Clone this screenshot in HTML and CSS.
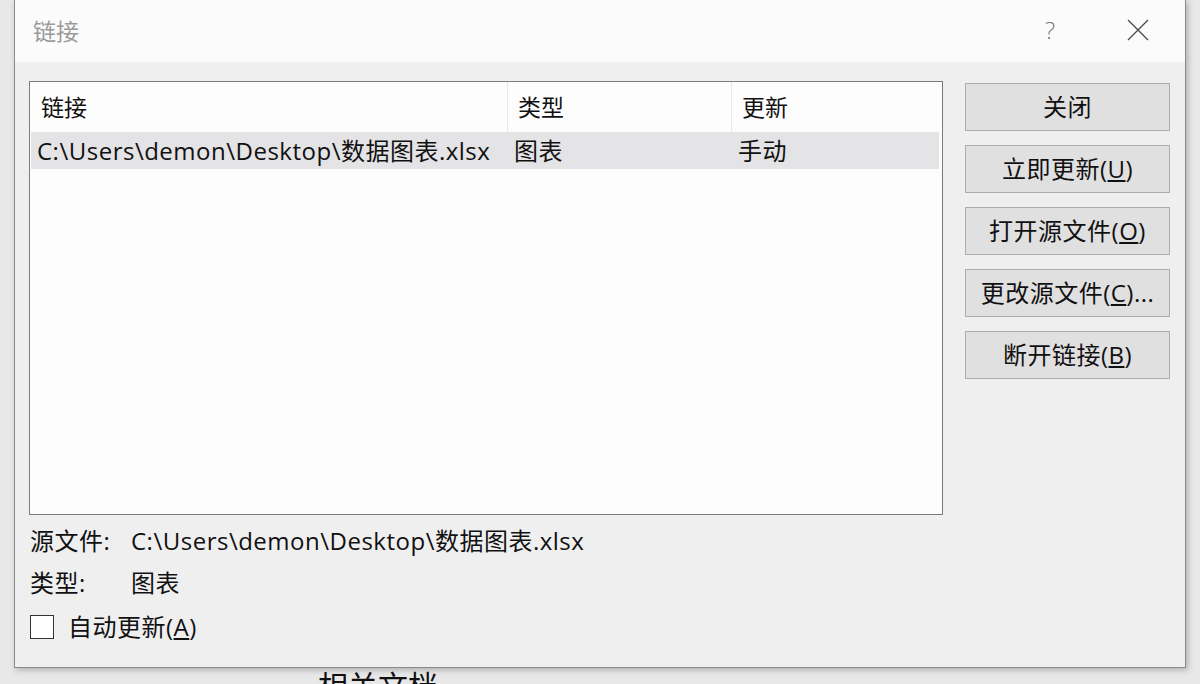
FILE: index.html
```html
<!DOCTYPE html>
<html>
<head>
    <title>链接</title>
    <link rel="stylesheet" href="styles.css">
</head>
<body>
    <div class="dialog">
        <div class="titlebar">
            <span class="title">链接</span>
            <span class="help">?</span>
            <span class="close">
                <svg width="22" height="22" viewBox="0 0 22 22"><path d="M1 1 L21 21 M21 1 L1 21" stroke="#4a4a4a" stroke-width="1.3" fill="none"/></svg>
            </span>
        </div>
        <div class="content">
            <div class="left">
                <div class="list">
                    <div class="list-head">
                        <div class="col">链接</div>
                        <div class="col">类型</div>
                        <div class="col">更新</div>
                    </div>
                    <div class="list-row selected">
                        <div class="cell">C:\Users\demon\Desktop\数据图表.xlsx</div>
                        <div class="cell">图表</div>
                        <div class="cell">手动</div>
                    </div>
                </div>
                <div class="info">
                    <div class="info-row"><span class="label">源文件:</span><span>C:\Users\demon\Desktop\数据图表.xlsx</span></div>
                    <div class="info-row"><span class="label">类型:</span><span>图表</span></div>
                    <label class="check-row"><span class="checkbox"></span><span>自动更新(<u>A</u>)</span></label>
                </div>
            </div>
            <div class="buttons">
                <button class="btn">关闭</button>
                <button class="btn">立即更新(<u>U</u>)</button>
                <button class="btn">打开源文件(<u>O</u>)</button>
                <button class="btn">更改源文件(<u>C</u>)...</button>
                <button class="btn">断开链接(<u>B</u>)</button>
            </div>
        </div>
    </div>
    <div class="behind">相关文档</div>
</body>
</html>
```

FILE: styles.css
```css
body {
    margin: 0;
    background: #e8e8e8;
    font-family: "Open Sans", "Noto Sans CJK SC", sans-serif;
    color: #111;
    overflow: hidden;
}
.dialog {
    margin-left: 14px;
    width: 1170px;
    height: 667px;
    border: 1px solid #8a8a8a;
    border-top: none;
    background: #f0eff0;
    box-shadow: 2px 2px 6px rgba(0, 0, 0, 0.25);
}
.titlebar {
    height: 62px;
    background: #fcfbfc;
    display: flex;
    align-items: center;
    padding-bottom: 3px;
    box-sizing: border-box;
}
.title {
    margin-left: 18px;
    font-size: 23px;
    color: #9a9a9a;
    flex: 1;
}
.help {
    font-size: 24px;
    color: #777;
    margin-right: 72px;
    font-weight: 300;
}
.close {
    display: flex;
    margin-right: 36px;
}
.content {
    display: flex;
    padding: 19px 0 0 14px;
    gap: 22px;
}
.left {
    width: 914px;
}
.list {
    height: 432px;
    border: 1px solid #7b7b7b;
    background: #fefdfe;
    padding-left: 1px;
    padding-right: 3px;
}
.list-head {
    display: grid;
    grid-template-columns: 477px 224px 1fr;
    height: 50px;
}
.list-head .col {
    display: flex;
    align-items: center;
    padding-left: 10px;
    padding-bottom: 3px;
    font-size: 23px;
    border-right: 1px solid #e8e8e8;
}
.list-head .col:last-child {
    border-right: none;
}
.list-row {
    display: grid;
    grid-template-columns: 477px 224px 1fr;
    height: 37px;
}
.list-row.selected {
    background: #e4e3e5;
}
.cell {
    display: flex;
    align-items: center;
    padding-left: 6px;
    padding-bottom: 3px;
    font-size: 24px;
    letter-spacing: 0.5px;
    white-space: nowrap;
}
.info {
    padding-left: 1px;
    font-size: 24px;
    letter-spacing: 0.5px;
}
.info-row {
    display: flex;
    align-items: center;
    height: 42px;
}
.info-row:first-child {
    margin-top: 3px;
}
.label {
    width: 101px;
}
.check-row {
    display: flex;
    align-items: center;
    height: 46px;
    gap: 14px;
}
.checkbox {
    width: 22px;
    height: 22px;
    border: 1px solid #333;
    background: #fff;
    margin-top: 3px;
}
.buttons {
    display: flex;
    flex-direction: column;
    gap: 14px;
    padding-top: 2px;
}
.btn {
    width: 205px;
    height: 48px;
    background: #e1e0e1;
    border: 1px solid #adadad;
    font-family: inherit;
    font-size: 24px;
    letter-spacing: 0.5px;
    color: #111;
    padding: 0 0 4px 0;
}
.behind {
    margin-left: 318px;
    font-size: 30px;
    line-height: 30px;
    padding-top: 3px;
    color: #111;
}
```
